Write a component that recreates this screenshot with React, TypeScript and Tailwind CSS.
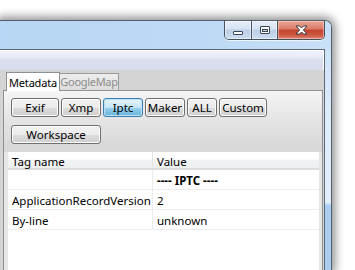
import React from "react";

const font = { fontFamily: '"Segoe UI", "Noto Sans", "Open Sans", sans-serif' };

function WinButton({ label, w, active }: { label: string; w: string; active?: boolean }) {
  return (
    <div
      className={
        "h-[19px] flex items-center justify-center rounded-[3px] border text-[11.5px] leading-none text-black " +
        w +
        (active
          ? " border-[#3c7fb1] bg-[linear-gradient(to_bottom,#e5f4fc_0%,#c4e5f6_50%,#98d1ef_51%,#68b3db_100%)] shadow-[inset_0_0_0_1px_#bfe0f3]"
          : " border-[#707070] bg-[linear-gradient(to_bottom,#f2f2f2_0%,#ebebeb_50%,#dddddd_51%,#cfcfcf_100%)] shadow-[inset_0_0_0_1px_#fcfcfc]")
      }
    >
      {label}
    </div>
  );
}

function Row({ a, b, bold }: { a: string; b: string; bold?: boolean }) {
  return (
    <div className="flex h-[20px] border-b border-[#ededed] text-[11.5px] text-black">
      <div className="w-[145px] shrink-0 border-r border-[#ebebeb] pl-[4px] pt-[3px] flex items-center whitespace-nowrap">{a}</div>
      <div className={"flex-1 pl-[4px] pt-[3px] flex items-center" + (bold ? " font-bold" : "")}>{b}</div>
    </div>
  );
}

export default function App() {
  return (
    <div className="w-[355px] h-[270px] bg-white overflow-hidden pt-[20px]" style={font}>
      <div className="w-[332px] h-[250px] flex flex-col rounded-tr-[7px] border-t border-r border-[#56606c] bg-[linear-gradient(to_bottom,#bad8f4_0%,#cfe3f7_12%,#dfecfa_40%,#e2eefa_73%,#aacdf0_74%,#a9ccef_100%)] shadow-[0_0_10px_3px_rgba(0,0,0,0.45)]">
        {/* title bar */}
        <div className="h-[28px] shrink-0 flex justify-end pr-[6px] bg-[linear-gradient(to_right,#b8d7f4_0%,#bcd9f5_60%,#c9e0f6_100%)] rounded-tr-[6px]">
          <div className="flex h-[19px] border border-t-0 border-[#44505e] rounded-b-[5px] overflow-hidden shadow-[0_1px_0_rgba(255,255,255,0.7)]">
            <div className="w-[27px] h-full flex items-center justify-center bg-[linear-gradient(to_bottom,#e7eff9_0%,#d6e3f2_45%,#bccfe6_50%,#cbdcef_100%)] border-r border-[#44505e] shadow-[inset_0_0_0_1px_rgba(255,255,255,0.5)]">
              <div className="w-[10px] h-[4px] mt-[6px] bg-white border border-[#3a4654] rounded-[1px]" />
            </div>
            <div className="w-[26px] h-full flex items-center justify-center bg-[linear-gradient(to_bottom,#e7eff9_0%,#d6e3f2_45%,#bccfe6_50%,#cbdcef_100%)] border-r border-[#44505e] shadow-[inset_0_0_0_1px_rgba(255,255,255,0.5)]">
              <div className="w-[10px] h-[8px] border border-[#3a4654] bg-white rounded-[1px] flex items-center justify-center">
                <div className="w-[6px] h-[3px] border border-[#3a4654] bg-[#c8d6e6]" />
              </div>
            </div>
            <div className="w-[46px] h-full flex items-center justify-center bg-[linear-gradient(to_bottom,#eaa897_0%,#d97a66_45%,#c4432d_50%,#cc5a45_80%,#e08b78_100%)] shadow-[inset_0_0_0_1px_rgba(255,220,210,0.5)]">
              <svg width="13" height="10" viewBox="0 0 13 10">
                <path
                  d="M1 1 H4.5 L6.5 3 L8.5 1 H12 L8.5 5 L12 9 H8.5 L6.5 7 L4.5 9 H1 L4.5 5 Z"
                  fill="#ffffff"
                  stroke="#3a3a3a"
                  strokeWidth="1"
                  strokeLinejoin="round"
                />
              </svg>
            </div>
          </div>
        </div>

        {/* client area */}
        <div className="flex-1 mr-[6px] flex flex-col border-t border-r border-[#5b6877] bg-[#d4d4d4] min-h-0">
          <div className="h-[20px] shrink-0 border-t border-r border-white bg-[linear-gradient(to_bottom,#f0f2fa_0%,#e6e9f6_35%,#dcdfef_45%,#d8dcee_100%)]" />
          {/* tabs */}
          <div className="flex-1 flex flex-col pt-[2px] min-h-0">
            <div className="flex pl-[6px] h-[18px] shrink-0 items-end">
              <div className="h-[19px] w-[54px] -mb-px z-10 relative bg-white border border-b-0 border-[#8d9095] flex items-center justify-center pt-[2px] text-[11px] tracking-[-0.2px] text-black whitespace-nowrap">
                Metadata
              </div>
              <div className="h-[17px] w-[59px] border border-l-0 border-b-0 border-[#9a9a9a] bg-[linear-gradient(to_bottom,#eeeeee,#dcdcdc)] flex items-center justify-center pt-[1px] text-[11px] tracking-[-0.3px] text-[#8c8c8c] whitespace-nowrap">
                GoogleMap
              </div>
            </div>
            <div className="flex-1 ml-[3px] mr-[1px] flex flex-col border border-b-0 border-[#8e9095] bg-[linear-gradient(to_bottom,#f5f5f5_0px,#e6e6e6_25px,#d9d9d9_55px,#d6d6d6_100%)] min-h-0">
              <div className="px-[7px] pt-[7px]">
                <div className="flex gap-[2px]">
                  <WinButton label="Exif" w="w-[48px]" />
                  <WinButton label="Xmp" w="w-[40px]" />
                  <WinButton label="Iptc" w="w-[40px]" active />
                  <WinButton label="Maker" w="w-[40px]" />
                  <WinButton label="ALL" w="w-[30px]" />
                  <WinButton label="Custom" w="w-[48px]" />
                </div>
                <div className="flex mt-[8px]">
                  <WinButton label="Workspace" w="w-[90px]" />
                </div>
              </div>
              <div className="flex-1 mt-[8px] flex bg-[#e6e6e6] pl-[4px] pr-[3px] min-h-0">
                <div className="flex-1 bg-white flex flex-col">
                  <div className="flex h-[18px] border-b-2 border-[#dcdcdc] text-[11.5px] text-black bg-[linear-gradient(to_bottom,#ffffff_0%,#ffffff_45%,#f2f3f4_50%,#eeeff0_100%)]">
                    <div className="w-[145px] shrink-0 border-r border-[#e4e4e4] pl-[4px] pt-[3px] flex items-center">Tag name</div>
                    <div className="flex-1 pl-[4px] pt-[3px] flex items-center">Value</div>
                  </div>
                  <Row a="" b="---- IPTC ----" bold />
                  <Row a="ApplicationRecordVersion" b="2" />
                  <Row a="By-line" b="unknown" />
                </div>
              </div>
            </div>
          </div>
        </div>
      </div>
    </div>
  );
}
